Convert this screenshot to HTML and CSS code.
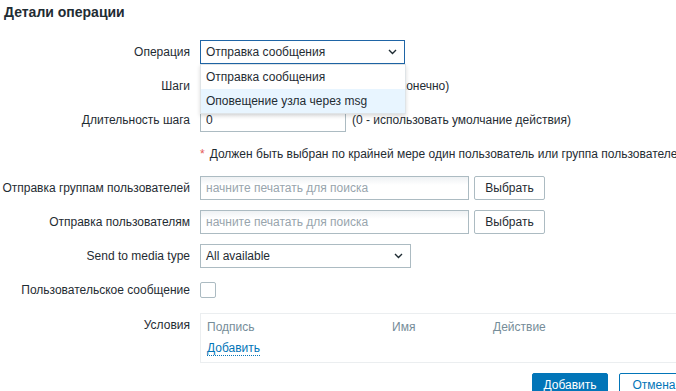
FILE: index.html
```html
<!DOCTYPE html>
<html lang="ru">
<head>
  <meta charset="UTF-8" />
  <title>Детали операции</title>
  <link rel="stylesheet" href="styles.css">
</head>
<body>
  <h2 class="title">Детали операции</h2>
  <div class="form">
    <div class="row">
      <label class="label">Операция</label>
      <div class="field">
        <div class="select select-open" style="width: 205px">
          <span>Отправка сообщения</span>
          <svg class="chev" width="9" height="6" viewBox="0 0 9 6"><path d="M1 1l3.5 3.5L8 1" fill="none" stroke="#1f2c33" stroke-width="1.4"/></svg>
          <ul class="menu">
            <li>Отправка сообщения</li>
            <li class="hover">Оповещение узла через msg</li>
          </ul>
        </div>
      </div>
    </div>
    <div class="row">
      <label class="label">Шаги</label>
      <div class="field">
        <input class="input" style="width: 68px" value="1">
        <span class="sep">-</span>
        <input class="input" style="width: 68px" value="1">
        <span class="hint">(0 - бесконечно)</span>
      </div>
    </div>
    <div class="row">
      <label class="label">Длительность шага</label>
      <div class="field">
        <input class="input" style="width: 146px" value="0">
        <span class="hint">(0 - использовать умолчание действия)</span>
      </div>
    </div>
    <div class="row">
      <span class="label"></span>
      <div class="field note"><span class="req">*</span> Должен быть выбран по крайней мере один пользователь или группа пользователей.</div>
    </div>
    <div class="row">
      <label class="label">Отправка группам пользователей</label>
      <div class="field">
        <input class="input" style="width: 269px" placeholder="начните печатать для поиска">
        <button class="btn-alt">Выбрать</button>
      </div>
    </div>
    <div class="row">
      <label class="label">Отправка пользователям</label>
      <div class="field">
        <input class="input" style="width: 269px" placeholder="начните печатать для поиска">
        <button class="btn-alt">Выбрать</button>
      </div>
    </div>
    <div class="row">
      <label class="label">Send to media type</label>
      <div class="field">
        <div class="select" style="width: 211px">
          <span>All available</span>
          <svg class="chev" width="9" height="6" viewBox="0 0 9 6"><path d="M1 1l3.5 3.5L8 1" fill="none" stroke="#1f2c33" stroke-width="1.4"/></svg>
        </div>
      </div>
    </div>
    <div class="row">
      <label class="label">Пользовательское сообщение</label>
      <div class="field"><span class="checkbox"></span></div>
    </div>
    <div class="row row-top">
      <label class="label">Условия</label>
      <div class="field">
        <div class="conditions">
          <div class="cond-head">
            <span class="col-1">Подпись</span>
            <span class="col-2">Имя</span>
            <span class="col-3">Действие</span>
          </div>
          <a class="link" href="#">Добавить</a>
        </div>
      </div>
    </div>
    <div class="buttons">
      <button class="btn-main">Добавить</button>
      <button class="btn-cancel">Отмена</button>
    </div>
  </div>
</body>
</html>
```

FILE: styles.css
```css
body {
  margin: 0;
  font-family: "Liberation Sans", Arial, sans-serif;
  font-size: 12px;
  color: #1f2c33;
  background: #fff;
  overflow: hidden;
}
.title {
  margin: 0;
  padding: 4px 0 0 4px;
  font-size: 14px;
  font-weight: 700;
  line-height: 16px;
}
.form {
  display: flex;
  flex-direction: column;
  gap: 10px;
  padding-top: 20px;
}
.row {
  display: flex;
  align-items: center;
  gap: 10px;
  min-height: 24px;
}
.row-top {
  align-items: flex-start;
  margin-top: 1px;
}
.row-top .label {
  padding-top: 5px;
}
.label {
  width: 190px;
  flex: none;
  text-align: right;
  white-space: nowrap;
}
.field {
  display: flex;
  align-items: center;
  gap: 5px;
  white-space: nowrap;
  flex: 1;
}
.note {
  white-space: nowrap;
}
.req {
  color: #e45959;
}
.input {
  box-sizing: border-box;
  height: 24px;
  border: 1px solid #acbbc2;
  padding: 0 5px;
  font: inherit;
  color: #1f2c33;
  background: linear-gradient(#eef1f3, #fff 8px);
}
.input::placeholder {
  color: #98a5ad;
}
.hint {
  margin-left: 1px;
}
.sep {
  margin: 0 2px;
}
.select {
  position: relative;
  box-sizing: border-box;
  height: 24px;
  border: 1px solid #acbbc2;
  display: flex;
  align-items: center;
  justify-content: space-between;
  padding: 0 7px 0 5px;
}
.select-open {
  border-color: #1f65a6;
  z-index: 2;
}
.chev {
  display: block;
}
.menu {
  position: absolute;
  left: -1px;
  top: 23px;
  width: 204px;
  margin: 0;
  padding: 0;
  list-style: none;
  background: #fff;
  border: 1px solid #dfe4e7;
  box-shadow: 0 2px 4px rgba(0, 0, 0, 0.15);
}
.menu li {
  height: 24px;
  line-height: 24px;
  padding: 0 5px;
}
.menu li.hover {
  background: #e8f5ff;
}
.btn-alt {
  box-sizing: border-box;
  height: 24px;
  width: 71px;
  border: 1px solid #acbbc2;
  border-radius: 2px;
  background: #fff;
  color: #1f2c33;
  font: inherit;
}
.checkbox {
  box-sizing: border-box;
  width: 16px;
  height: 16px;
  border: 1px solid #acbbc2;
  border-radius: 2px;
}
.conditions {
  box-sizing: border-box;
  width: 490px;
  height: 50px;
  border: 1px solid #ebeef0;
  padding: 6px 6px;
}
.cond-head {
  display: flex;
  color: #768d99;
  height: 14px;
  line-height: 14px;
}
.col-1 {
  width: 185px;
}
.col-2 {
  width: 101px;
}
.link {
  display: inline-block;
  margin-top: 8px;
  color: #0275b8;
  text-decoration: none;
  border-bottom: 1px dotted #0275b8;
  line-height: 13px;
}
.buttons {
  display: flex;
  gap: 11px;
  padding-left: 532px;
}
.btn-main,
.btn-cancel {
  box-sizing: border-box;
  height: 24px;
  border-radius: 2px;
  font: inherit;
  flex: none;
}
.btn-main {
  width: 76px;
  background: #0275b8;
  border: 1px solid #0275b8;
  color: #fff;
}
.btn-cancel {
  width: 70px;
  background: #fff;
  border: 1px solid #0275b8;
  color: #0275b8;
}
```
